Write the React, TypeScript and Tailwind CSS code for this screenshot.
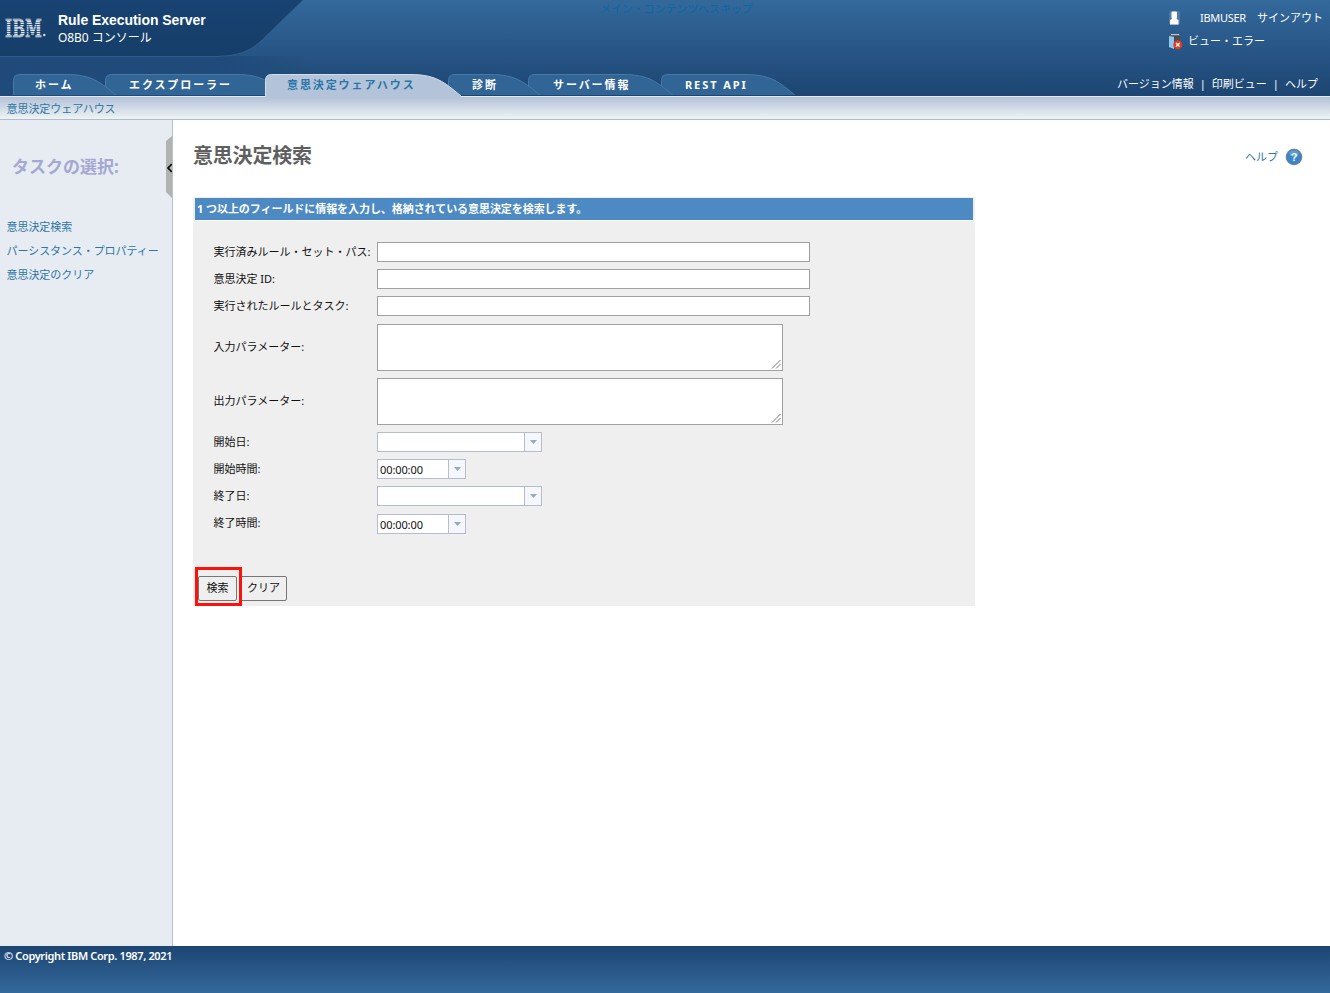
import { ReactNode } from "react";

interface Tab {
  label: string;
  width: number;
  active?: boolean;
  className: string;
}

const tabs: Tab[] = [
  { label: "ホーム", width: 104, className: "w-[104px] pl-[22px] z-[6]" },
  { label: "エクスプローラー", width: 182, className: "w-[182px] pl-[24px] -ml-[12px] z-[5]" },
  { label: "意思決定ウェアハウス", width: 196, active: true, className: "w-[196px] pl-[22px] -ml-[22px] z-[7]" },
  { label: "診断", width: 93, className: "w-[93px] pl-[24px] -ml-[13px] z-[4]" },
  { label: "サーバー情報", width: 146, className: "w-[146px] pl-[25px] -ml-[13px] z-[3]" },
  { label: "REST API", width: 135, className: "w-[135px] pl-[24px] -ml-[13px] z-[2]" },
];

const tasks = ["意思決定検索", "パーシスタンス・プロパティー", "意思決定のクリア"];

function IbmLogo() {
  return (
    <svg width="43" height="20" viewBox="0 0 43 20" className="shrink-0 overflow-visible">
      <defs>
        <pattern id="stripes" width="43" height="2.3" patternUnits="userSpaceOnUse">
          <rect width="43" height="1.6" fill="#dfe7ef" />
        </pattern>
      </defs>
      <text
        x="0"
        y="18.5"
        fontFamily="DejaVu Serif"
        fontWeight="bold"
        fontSize="23.5"
        textLength="37"
        lengthAdjust="spacingAndGlyphs"
        fill="url(#stripes)"
        stroke="url(#stripes)"
        strokeWidth="0.5"
      >
        IBM
      </text>
      <circle cx="39.300" cy="17" r="1.2" fill="#d5dfe9" />
    </svg>
  );
}

function TabItem({ tab }: { tab: Tab }) {
  const w = tab.width;
  const edge = `M0.5 24V6.5Q0.5 0.5 6.5 0.5H${w - 51}C${w - 25} 0.5 ${w - 17} 8 ${w} 22`;
  return (
    <a className={`relative block h-[23px] shrink-0 whitespace-nowrap ${tab.className}`}>
      <svg width={w} height={tab.active ? 23 : 21} className="absolute left-0 top-0">
        <path d={`${edge}V24H0Z`} fill={tab.active ? "#b3c3da" : "#316596"} />
        <path d={edge} fill="none" stroke={tab.active ? "#d3deeb" : "#4579a7"} strokeWidth="1" />
      </svg>
      <span
        className={`relative block text-[11px] font-bold leading-[22px] tracking-[1.9px] ${
          tab.active ? "text-[#2a76a6]" : "text-white"
        }`}
      >
        {tab.label}
      </span>
    </a>
  );
}

function Header() {
  return (
    <header className="relative flex h-[96px] justify-between bg-linear-to-b from-[#34699c] to-[#1c4572] text-white">
      <svg width="310" height="96" className="absolute left-0 top-0">
        <defs>
          <linearGradient id="brand" x1="0" y1="0" x2="0" y2="1">
            <stop offset="0" stopColor="#184272" />
            <stop offset="1" stopColor="#163e69" />
          </linearGradient>
          <linearGradient id="underBrand" x1="0" y1="0" x2="1" y2="0">
            <stop offset="0.7" stopColor="#1f4a79" />
            <stop offset="1" stopColor="#1f4a79" stopOpacity="0" />
          </linearGradient>
        </defs>
        <rect y="56" width="310" height="40" fill="url(#underBrand)" />
        <path d="M0 0H303L260 42Q246 56 218 56.5H0Z" fill="url(#brand)" />
        <path d="M303 0L260 42Q246 56 218 56.5H0" fill="none" stroke="#2c5d8d" />
      </svg>
      <div className="relative flex flex-col justify-between">
        <div className="flex pl-[5px] pt-[11px]">
          <div className="pt-[7px]">
            <IbmLogo />
          </div>
          <div className="pl-[10px]">
            <div className="font-['Liberation_Sans'] text-[14px] font-bold leading-[18px] tracking-[-0.05px]">
              Rule Execution Server
            </div>
            <div className="text-[12px] leading-[17px]">
              <span className="tracking-[-0.1px]">O8B0</span> コンソール
            </div>
          </div>
        </div>
        <nav className="flex h-[22px] pl-[13px]">
          {tabs.map((tab) => (
            <TabItem key={tab.label} tab={tab} />
          ))}
        </nav>
      </div>
      <a className="absolute left-[600px] top-0 z-10 whitespace-nowrap text-[11px] leading-[17px] tracking-[-0.1px] text-[#0b68a2]">
        メイン・コンテンツへスキップ
      </a>
      <div className="relative flex flex-col justify-between pr-[7px] text-[11px]">
        <div className="pl-[51px] pt-[8px]">
          <div className="flex h-[20px] items-center">
            <svg width="13" height="16" viewBox="0 0 13 16">
              <rect x="1" y="1" width="11" height="14" rx="2" fill="#fff" opacity="0.15" />
              <path d="M3.500 2.500Q3.500 1.500 4.500 1.500h3.500Q9 1.500 9 2.500V7.500L8.500 9 10.500 10v4.500H2V10L4 9 3.500 7.500z" fill="#fff" />
            </svg>
            <span className="ml-[19px] w-[57px] tracking-[-0.3px]">IBMUSER</span>
            <span>サインアウト</span>
          </div>
          <div className="flex h-[27px] items-center">
            <svg width="15" height="17" viewBox="0 0 15 17">
              <path d="M1 3L4 1h8v13H4L1 15z" fill="#5e6670" />
              <path d="M1 3l5 1v12l-5-2z" fill="#8fc8ee" />
              <path d="M6 3h6v11H6z" fill="#464d57" />
              <path d="M3 1.500h8" stroke="#c2c7cd" />
              <circle cx="9.800" cy="11.800" r="4.500" fill="#e33b22" />
              <path d="M8 10l3.600 3.600m0-3.600l-3.600 3.600" stroke="#fff" strokeWidth="1.300" />
            </svg>
            <span className="ml-[5px]">ビュー・エラー</span>
          </div>
        </div>
        <div className="flex h-[22px] items-center gap-[6px] whitespace-nowrap pb-px pr-[5px]">
          <span>バージョン情報</span>
          <span>|</span>
          <span>印刷ビュー</span>
          <span>|</span>
          <span>ヘルプ</span>
        </div>
      </div>
    </header>
  );
}

function Sidebar() {
  return (
    <aside className="flex w-[173px] shrink-0 border-r border-[#b3c1d2] bg-[#e6ecf2]">
      <div className="w-[166px] whitespace-nowrap">
        <h2 className="pl-[12px] pt-[35px] text-[17px] font-bold leading-[24px] text-[#a5a8d3]">タスクの選択:</h2>
        <ul className="pl-[6.500px] pt-[36px] text-[11px] text-[#2f76a3]">
          {tasks.map((task) => (
            <li key={task} className="h-[24px] leading-[24px] tracking-[-0.05px]">
              {task}
            </li>
          ))}
        </ul>
      </div>
      <svg width="6" height="62" viewBox="0 0 6 62" className="mt-[16px]">
        <path d="M6 0L0 5V56L6 62Z" fill="#b2b2b2" />
        <path d="M5.800 28L2 32l3.800 4" fill="none" stroke="#000" strokeWidth="1.500" />
      </svg>
    </aside>
  );
}

function Row({ label, tall, children }: { label: string; tall?: boolean; children: ReactNode }) {
  return (
    <div className={`flex items-center ${tall ? "h-[54.300px]" : "h-[27.150px]"}`}>
      <label className="w-[163.500px] shrink-0 whitespace-nowrap">{label}</label>
      {children}
    </div>
  );
}

function TextField() {
  return <input className="h-[20px] w-[432.500px] border border-[#a0a0a0] bg-white px-1" />;
}

function TextArea() {
  return (
    <div className="flex h-[47px] w-[406px] items-end justify-end border border-[#a0a0a0] bg-white">
      <svg width="11" height="11" viewBox="0 0 11 11">
        <path d="M1 9.500L9.500 1M5 9.500L9.500 5" stroke="#777" fill="none" />
      </svg>
    </div>
  );
}

function Combo({ value, wide }: { value?: string; wide?: boolean }) {
  return (
    <div className={`flex h-[20px] border border-[#b5bcd0] bg-white ${wide ? "w-[165px]" : "w-[89px]"}`}>
      <span className="flex-1 pl-[2px] pt-[1px] text-[11px] leading-[18px] tracking-[-0.1px]">{value}</span>
      <span className="flex w-[17px] items-center justify-center border-l border-[#b5bcd0] bg-[#f6f7fa]">
        <svg width="7" height="4" viewBox="0 0 7 4">
          <path d="M0 0h7L3.500 4z" fill="#92a8cc" />
        </svg>
      </span>
    </div>
  );
}

function SearchPanel() {
  return (
    <section className="mt-[29px] h-[409px] w-[782px] bg-[#efefef] px-[2px] pt-px text-[11px] text-[#111]">
      <h2 className="h-[22px] w-[778px] bg-[#4d8ac3] pl-[2px] font-bold leading-[22px] tracking-[-0.06px] text-white">
        1 つ以上のフィールドに情報を入力し、格納されている意思決定を検索します。
      </h2>
      <div className="border-t border-white pl-[18.500px] pt-[17.500px]">
        <Row label="実行済みルール・セット・パス:">
          <TextField />
        </Row>
        <Row label="意思決定 ID:">
          <TextField />
        </Row>
        <Row label="実行されたルールとタスク:">
          <TextField />
        </Row>
        <Row label="入力パラメーター:" tall>
          <TextArea />
        </Row>
        <Row label="出力パラメーター:" tall>
          <TextArea />
        </Row>
        <Row label="開始日:">
          <Combo wide />
        </Row>
        <Row label="開始時間:">
          <Combo value="00:00:00" />
        </Row>
        <Row label="終了日:">
          <Combo wide />
        </Row>
        <Row label="終了時間:">
          <Combo value="00:00:00" />
        </Row>
      </div>
      <div className="relative flex gap-[3px] pl-[3px] pt-[39px]">
        <button className="h-[25px] w-[39px] rounded-[2px] border border-[#767676] bg-[#efefef]">検索</button>
        <button className="h-[25px] w-[47px] rounded-[2px] border border-[#767676] bg-[#efefef]">クリア</button>
        {/* highlight around the search button */}
        <div className="absolute left-0 top-[30px] h-[39px] w-[47px] border-[3px] border-[#fb130b]" />
      </div>
    </section>
  );
}

export default function App() {
  return (
    <div className="flex h-[993px] w-[1330px] flex-col overflow-hidden bg-white font-['Noto_Sans','Noto_Sans_CJK_JP',sans-serif]">
      <Header />
      <div className="h-[24px] shrink-0 border-b border-t border-b-[#aebdd0] border-t-[#e4eaf0] bg-linear-to-b from-[#b3c1d8] to-[#eff4f4] pl-[6.500px] text-[11px] leading-[23px] tracking-[-0.05px] text-[#2f76a3]">
        意思決定ウェアハウス
      </div>
      <div className="flex h-[826px] shrink-0">
        <Sidebar />
        <main className="flex-1 pl-[20px]">
          <div className="flex justify-between pr-[27px] pt-[20px]">
            <h1 className="h-[28px] pt-[2px] text-[20px] font-bold leading-[28px] tracking-[-0.2px] text-[#5f5f5f]">
              意思決定検索
            </h1>
            <div className="flex h-[34px] items-center gap-[7px] text-[11px] text-[#2f76a3]">
              <span>ヘルプ</span>
              <svg width="18" height="18" viewBox="0 0 18 18">
                <circle cx="9" cy="9" r="8.300" fill="#6b7f92" />
                <circle cx="9" cy="9" r="7" fill="#3a86cc" />
                <ellipse cx="9" cy="5.500" rx="5" ry="3" fill="#76afe0" opacity="0.6" />
                <text x="9" y="13" textAnchor="middle" fontSize="11" fontWeight="bold" fontFamily="Liberation Sans" fill="#fff">
                  ?
                </text>
              </svg>
            </div>
          </div>
          <div className="-mt-[6px]">
            <SearchPanel />
          </div>
        </main>
      </div>
      <footer className="h-[47px] shrink-0 bg-linear-to-b from-[#1c4572] to-[#34699c] pl-[4px] text-[11px] font-semibold leading-[19px] tracking-[-0.36px] text-white">
        © Copyright IBM Corp. 1987, 2021
      </footer>
    </div>
  );
}
